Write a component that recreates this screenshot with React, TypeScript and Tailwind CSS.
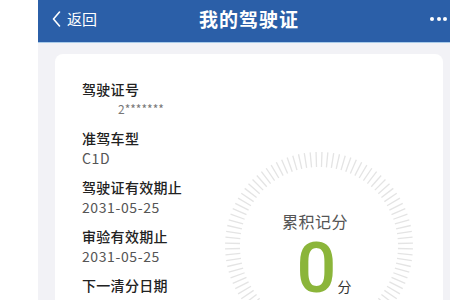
import React from 'react'

interface IInfoItem {
  title: string
  value: string
  indent?: boolean
}

const items: IInfoItem[] = [
  { title: '驾驶证号', value: '2*******', indent: true },
  { title: '准驾车型', value: 'C1D' },
  { title: '驾驶证有效期止', value: '2031-05-25' },
  { title: '审验有效期止', value: '2031-05-25' },
  { title: '下一清分日期', value: '2031-05-25' }
]

const font = { fontFamily: '"Noto Sans CJK SC", "Noto Sans", sans-serif' }

// tick ring, 270° with the gap at the bottom
const Ticks = () => {
  const ticks = []
  for (let a = -225; a <= 45; a += 3.6) {
    const rad = (a * Math.PI) / 180
    const c = Math.cos(rad)
    const s = Math.sin(rad)
    ticks.push(
      <line
        key={a}
        x1={100 + 79 * c}
        y1={100 + 79 * s}
        x2={100 + 94 * c}
        y2={100 + 94 * s}
        stroke="#e4e4e4"
        strokeWidth={1.3}
      />
    )
  }
  return (
    <svg width="200" height="200" viewBox="0 0 200 200" className="absolute inset-0">
      {ticks}
    </svg>
  )
}

export default function App () {
  return (
    <div className="w-[450px] h-[300px] overflow-hidden bg-white flex" style={font}>
      <div className="w-[38px] shrink-0" />

      <div className="flex-1 flex flex-col">
        <header className="h-[43px] shrink-0 bg-[#2b5fa8] border-b border-[#a9cbe9] flex items-center pb-[5px] text-white">
          <div className="w-[75px] flex items-center pl-[14px] gap-[6px]">
            <svg width="9" height="16" viewBox="0 0 9 16">
              <path d="M7.5 1 L1.5 8 L7.5 15" fill="none" stroke="white" strokeWidth="1.6" strokeLinecap="round" strokeLinejoin="round" />
            </svg>
            <span className="text-[15px] leading-none">返回</span>
          </div>
          <div className="flex-1 text-center text-[19px] font-semibold tracking-[1px] leading-none">
            我的驾驶证
          </div>
          <div className="w-[65px] flex items-center justify-end gap-[2.5px] pr-[3px]">
            <span className="w-[4px] h-[4px] rounded-full bg-white" />
            <span className="w-[4px] h-[4px] rounded-full bg-white" />
            <span className="w-[4px] h-[4px] rounded-full bg-white" />
          </div>
        </header>

        <div className="flex-1 bg-[#f2f2f6] pl-[17px] pr-[7px] pt-[11px]">
          <div className="h-full bg-white rounded-t-lg flex">
            <div className="w-[164px] shrink-0 pl-[27px] pt-[25px] flex flex-col gap-[9px]">
              {items.map(item => (
                <div key={item.title}>
                  <div className="text-[14px] leading-[20px] text-[#222] font-medium tracking-[0.3px]">
                    {item.title}
                  </div>
                  {item.indent
                    ? (
                        <div className="text-[12px] leading-[20px] text-[#777] pl-[36px]">
                          {item.value}
                        </div>
                      )
                    : (
                        <div className="text-[14px] leading-[20px] text-[#555] tracking-[0.6px]">
                          {item.value}
                        </div>
                      )}
                </div>
              ))}
            </div>

            <div className="mt-[92px] relative w-[200px] h-[200px] shrink-0">
              <Ticks />
              <div className="relative flex flex-col items-center pt-[64px]">
                <span className="text-[16px] leading-[22px] text-[#555] tracking-[0.5px] pr-[8px]">累积记分</span>
                <div className="flex items-baseline mt-[2px] pl-[10px]">
                  <span
                    className="text-[70px] leading-[68px] font-medium text-[#8bb53a]"
                    style={{ fontFamily: 'Roboto, "Liberation Sans", sans-serif' }}
                  >
                    0
                  </span>
                  <span className="text-[14px] text-[#333] ml-[1px]">分</span>
                </div>
              </div>
            </div>
          </div>
        </div>
      </div>
    </div>
  )
}
